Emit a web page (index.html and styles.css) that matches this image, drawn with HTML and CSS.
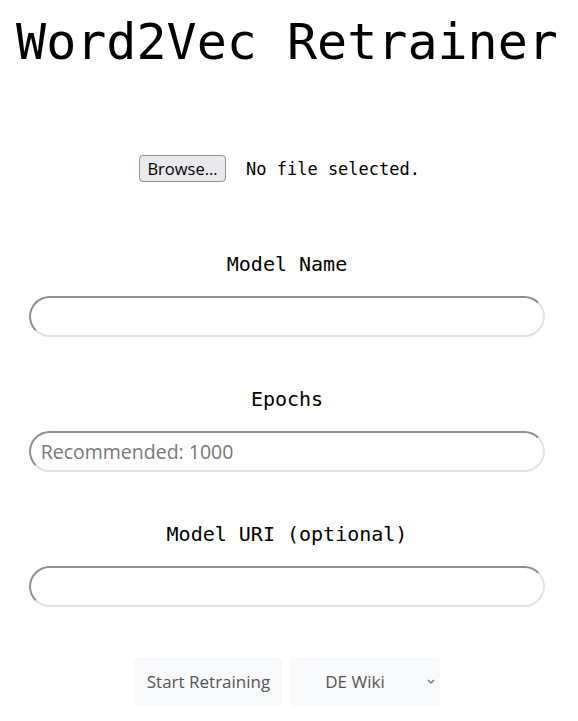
FILE: index.html
```html
<!DOCTYPE html>
<html lang="en">
<head>
<meta charset="utf-8">
<title>Word2Vec Retrainer</title>
<link rel="stylesheet" href="styles.css">
</head>
<body>
<main class="page">
  <h1 class="title">Word2Vec Retrainer</h1>

  <div class="file-row">
    <button class="browse" type="button">Browse…</button>
    <span class="file-status">No file selected.</span>
  </div>

  <label class="field-label" for="model-name">Model Name</label>
  <input class="field-input" id="model-name" type="text">

  <label class="field-label" for="epochs">Epochs</label>
  <input class="field-input" id="epochs" type="text" placeholder="Recommended: 1000">

  <label class="field-label" for="model-uri">Model URI (optional)</label>
  <input class="field-input" id="model-uri" type="text">

  <div class="actions">
    <button class="action-btn" type="button">Start Retraining</button>
    <div class="select-wrap">
      <select class="action-select">
        <option>DE Wiki</option>
      </select>
      <svg class="chevron" width="8" height="5" viewBox="0 0 8 5" aria-hidden="true">
        <path d="M1 1 L4 4 L7 1" fill="none" stroke="#666" stroke-width="1.1"/>
      </svg>
    </div>
  </div>
</main>
</body>
</html>
```

FILE: styles.css
```css
html, body {
  margin: 0;
  padding: 0;
  background: #ffffff;
}

.page {
  display: flex;
  flex-direction: column;
  align-items: center;
  padding-right: 4px;
  font-family: "DejaVu Sans Mono", monospace;
  color: #000;
}

.title {
  margin: 13px 0 0;
  font-size: 50px;
  line-height: 58px;
  font-weight: normal;
  white-space: nowrap;
}

.file-row {
  display: flex;
  align-items: center;
  gap: 20px;
  margin-top: 84px;
  margin-right: 15px;
}

.browse {
  box-sizing: border-box;
  width: 87px;
  height: 27px;
  padding: 0;
  border: 1px solid #8f8f9d;
  border-radius: 4px;
  background: #e9e9ed;
  color: #000;
  font-family: "Open Sans", sans-serif;
  font-size: 16.5px;
  line-height: 25px;
}

.file-status {
  font-size: 17px;
  line-height: 20px;
}

.field-label {
  display: block;
  margin-top: 70px;
  font-size: 20px;
  line-height: 24px;
}

.field-input ~ .field-label {
  margin-top: 50px;
}

.field-input {
  box-sizing: border-box;
  display: block;
  width: 90%;
  height: 41px;
  margin-top: 20px;
  padding: 0 10px;
  border: 2px solid;
  border-color: #8f8f8f #e2e2e2 #e2e2e2 #8f8f8f;
  border-radius: 21px;
  background: #fff;
  font-family: "Open Sans", sans-serif;
  font-size: 19.5px;
  color: #333;
  outline: none;
}

.field-input::placeholder {
  color: #777;
}

.actions {
  display: flex;
  gap: 7px;
  margin-top: 50px;
}

.action-btn,
.action-select {
  box-sizing: border-box;
  height: 49px;
  border: none;
  border-radius: 5px;
  background: #f8f9fa;
  color: #555;
  font-family: "Open Sans", sans-serif;
  font-size: 17px;
}

.action-btn {
  width: 149px;
  padding: 0;
}

.select-wrap {
  position: relative;
  width: 150px;
}

.action-select {
  width: 150px;
  padding: 0 20px 0 0;
  appearance: none;
  -webkit-appearance: none;
  text-align: center;
  text-align-last: center;
  outline: none;
}

.chevron {
  position: absolute;
  right: 5px;
  top: 22px;
}
```
